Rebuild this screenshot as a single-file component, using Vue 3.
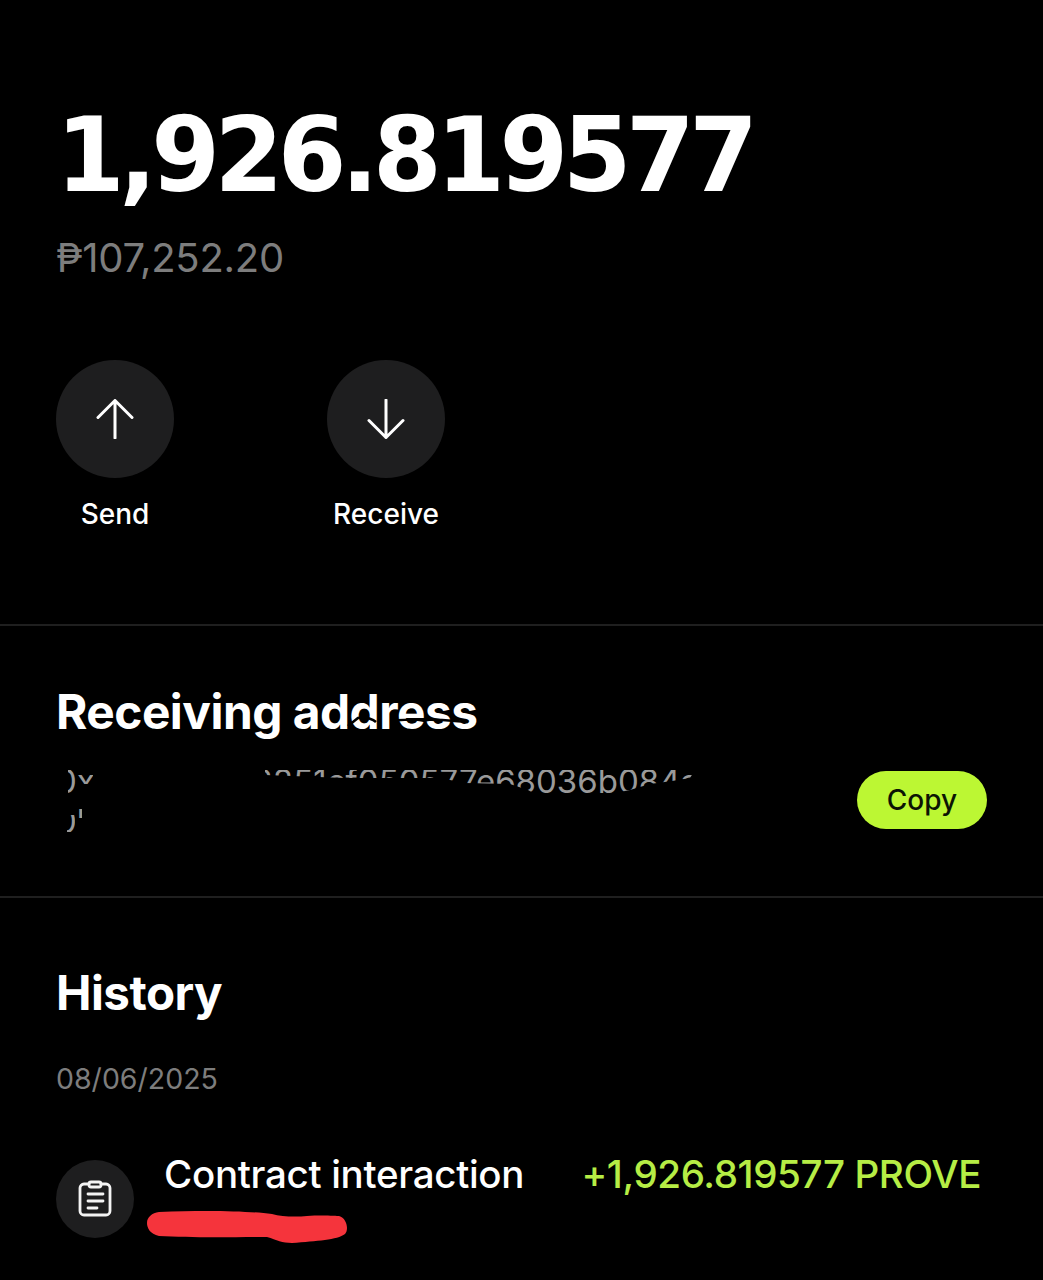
<script setup>
const actions = [
  { label: 'Send', path: 'M20 39V1.5M3 18.5 20 1.5l17 17' },
  { label: 'Receive', path: 'M20 1v37.5M3 21.5l17 17 17-17' }
]
</script>

<template>
  <main class="page">
    <section class="hero">
      <h1 class="amount">1,926.819577</h1>
      <p class="fiat">₱107,252.20</p>
      <div class="actions">
        <div v-for="a in actions" :key="a.label" class="action">
          <div class="round">
            <svg width="40" height="40" viewBox="0 0 40 40" fill="none" stroke="#fff" stroke-width="3" stroke-linecap="round" stroke-linejoin="round">
              <path :d="a.path" />
            </svg>
          </div>
          <span class="action-label">{{ a.label }}</span>
        </div>
      </div>
    </section>

    <section class="address">
      <h2 class="title title-masked">
        Receiving address
        <svg class="title-mask" width="440" height="54" viewBox="0 0 440 54" fill="none" stroke="#000" stroke-width="2.5">
          <path d="M292 41L302 33C310 31 318 35 320 37" />
          <path d="M335 36C360 33 390 35 412 37" />
        </svg>
      </h2>
      <div class="address-row">
        <div class="address-text">
          <p class="line">0x3d92ab772851cf050577e68036b084a</p>
          <p class="line">0b</p>
          <svg class="mask" width="660" height="90" viewBox="0 0 660 90">
            <path fill="#000" fill-rule="evenodd" d="M0 0H660V90H0ZM12 15H19V38H12ZM19 18H37V29H19ZM11 60H19V77H11ZM22 53H26V63H22ZM209 15H639L634 23L616 26L594 29L574 35L554 39H479L472 35L454 29L409 28L384 23H289L209 20Z" />
          </svg>
        </div>
        <button class="copy">Copy</button>
      </div>
    </section>

    <section class="history">
      <h2 class="title">History</h2>
      <p class="date">08/06/2025</p>
      <div class="tx">
        <div class="tx-icon">
          <svg width="34" height="38" viewBox="0 0 34 38" fill="none" stroke="#f4f4f4" stroke-width="2.8" stroke-linecap="round" stroke-linejoin="round">
            <path d="M11 4H6a4 4 0 0 0-4 4v23a4 4 0 0 0 4 4h22a4 4 0 0 0 4-4V8a4 4 0 0 0-4-4h-5" />
            <rect x="11" y="2" width="12" height="5" rx="2" />
            <path d="M10 14h15M10 21h15M10 28h9" />
          </svg>
        </div>
        <div class="tx-body">
          <div class="tx-top">
            <span class="tx-name">Contract interaction</span>
            <span class="tx-amount">+1,926.819577 PROVE</span>
          </div>
          <svg class="scribble" width="204" height="36" viewBox="0 0 204 36">
            <path fill="#f5343c" d="M12 2C60 0 100 1 125 4C135 7 150 7 160 6C175 5 190 6 192 6C200 8 202 20 198 24C190 30 170 31 145 33C135 33 130 30 120 27C90 27 45 28 12 26C3 24 0 18 0 13C0 7 5 3 12 2Z" />
          </svg>
        </div>
      </div>
    </section>
  </main>
</template>

<style scoped>
.page {
  width: 1043px;
  height: 1280px;
  overflow: hidden;
  background: #000;
  color: #fff;
  font-family: Inter, "Liberation Sans", sans-serif;
}
.hero {
  padding: 92px 56px 0;
  height: 626px;
  box-sizing: border-box;
  border-bottom: 2px solid #1f1f1f;
}
.amount {
  margin: 0;
  font-family: "DejaVu Sans", sans-serif;
  font-size: 104px;
  line-height: 126px;
  font-weight: 700;
  letter-spacing: -5.8px;
  white-space: nowrap;
  transform: scaleX(0.95);
  transform-origin: left center;
}
.fiat {
  margin: 18px 0 0;
  font-size: 40px;
  line-height: 44px;
  color: #7d7d7d;
  letter-spacing: -0.25px;
}
.actions {
  display: flex;
  gap: 153px;
  margin-top: 80px;
}
.action {
  width: 118px;
  display: flex;
  flex-direction: column;
  align-items: center;
  gap: 19px;
}
.round {
  width: 118px;
  height: 118px;
  border-radius: 50%;
  background: #1e1e1f;
  display: flex;
  align-items: center;
  justify-content: center;
}
.action-label {
  font-size: 28px;
  line-height: 34px;
  font-weight: 500;
  white-space: nowrap;
}
.address {
  height: 272px;
  box-sizing: border-box;
  padding: 59px 56px 0;
  border-bottom: 2px solid #1f1f1f;
}
.title {
  margin: 0;
  font-size: 47.5px;
  line-height: 54px;
  font-weight: 700;
  letter-spacing: -0.5px;
}
.title-masked {
  position: relative;
  font-size: 47.8px;
}
.title-mask {
  position: absolute;
  left: 0;
  top: 0;
}
.address-row {
  display: flex;
  justify-content: space-between;
  align-items: center;
  margin-top: 16px;
}
.address-text {
  position: relative;
  width: 660px;
  height: 90px;
  box-sizing: border-box;
  padding-top: 6px;
  overflow: hidden;
}
.line {
  margin: 0;
  font-size: 33px;
  line-height: 40px;
  color: #9a9a9a;
  white-space: nowrap;
}
.mask {
  position: absolute;
  left: 0;
  top: 0;
}
.copy {
  width: 130px;
  height: 58px;
  border: 0;
  border-radius: 29px;
  background: #bcf733;
  color: #0c1404;
  font-family: inherit;
  font-size: 28px;
  font-weight: 500;
  padding: 0;
}
.history {
  padding: 68px 56px 0;
}
.date {
  margin: 41px 0 0;
  font-size: 28.5px;
  line-height: 36px;
  color: #7d7d7d;
}
.tx {
  display: flex;
  gap: 30px;
  margin-top: 55px;
}
.tx-icon {
  width: 78px;
  height: 78px;
  flex: none;
  margin-top: 8px;
  border-radius: 50%;
  background: #1e1e1f;
  display: flex;
  align-items: center;
  justify-content: center;
}
.tx-body {
  flex: 1;
  position: relative;
}
.tx-top {
  display: flex;
  justify-content: space-between;
  padding-right: 6px;
}
.tx-name {
  font-size: 38.5px;
  line-height: 44px;
  font-weight: 500;
  letter-spacing: -0.3px;
  white-space: nowrap;
}
.tx-amount {
  font-size: 38.6px;
  line-height: 44px;
  font-weight: 500;
  color: #b6ed45;
  letter-spacing: -0.4px;
  white-space: nowrap;
}
.scribble {
  position: absolute;
  left: -17px;
  top: 58px;
}
</style>
